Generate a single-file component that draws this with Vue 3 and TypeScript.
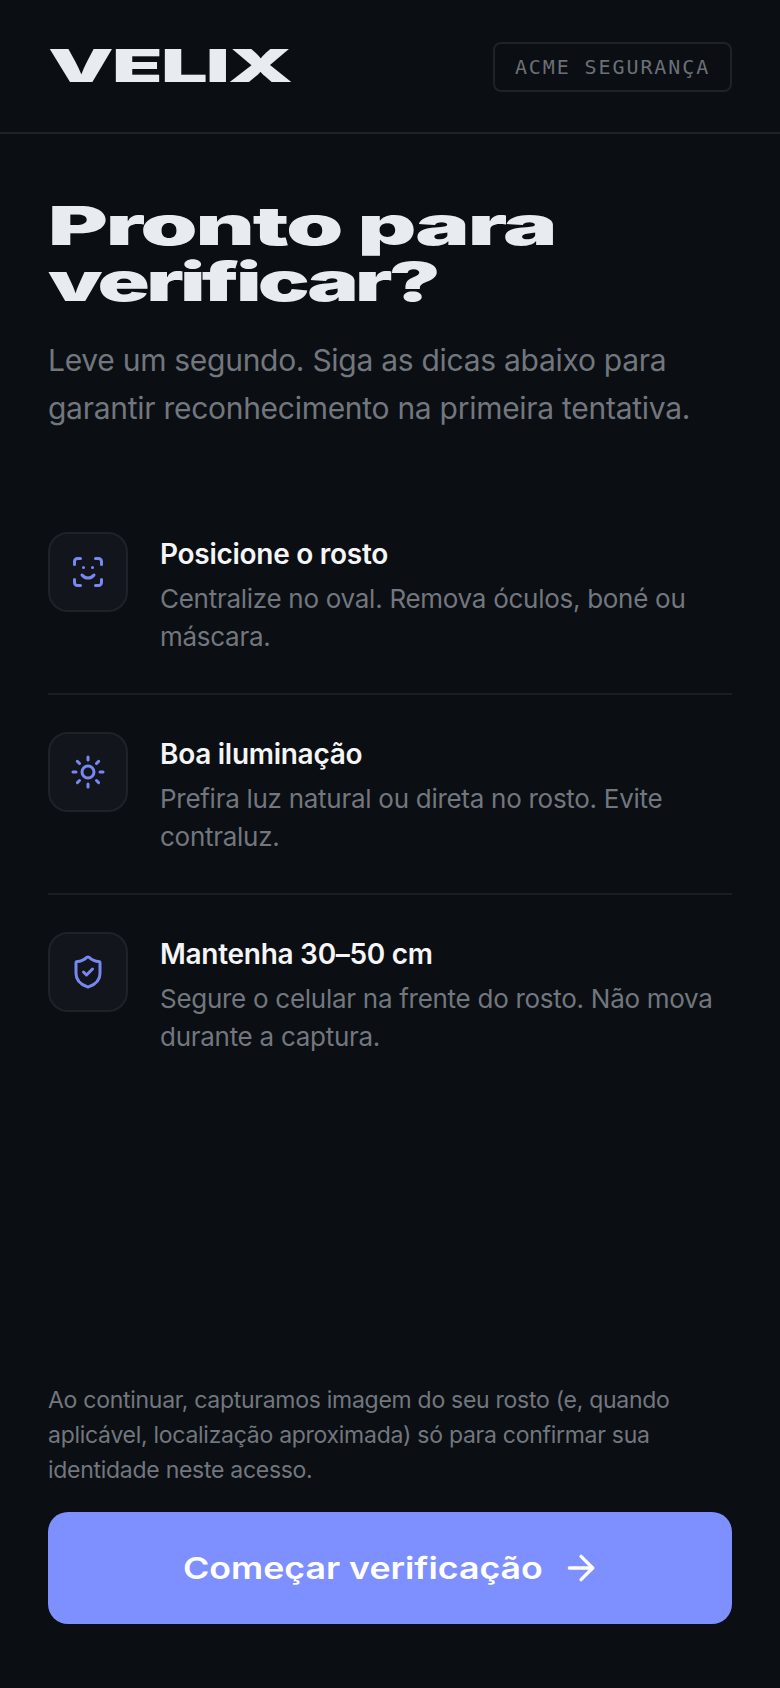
<script setup lang="ts">
interface Tip { id: string; title: string; text: string }
const tips: Tip[] = [
  { id: 'face', title: 'Posicione o rosto', text: 'Centralize no oval. Remova óculos, boné ou máscara.' },
  { id: 'sun', title: 'Boa iluminação', text: 'Prefira luz natural ou direta no rosto. Evite contraluz.' },
  { id: 'shield', title: 'Mantenha 30–50 cm', text: 'Segure o celular na frente do rosto. Não mova durante a captura.' },
]
</script>

<template>
  <div class="page">
    <header class="top">
      <span class="logo">VELIX</span>
      <span class="badge">ACME SEGURANÇA</span>
    </header>
    <main class="main">
      <h1 class="title"><span class="line-a">Pronto para</span><span class="line-b">verificar?</span></h1>
      <p class="sub">Leve um segundo. Siga as dicas abaixo para garantir reconhecimento na primeira tentativa.</p>
      <ul class="tips">
        <li v-for="t in tips" :key="t.id" class="tip">
          <div class="ico">
            <svg width="36" height="36" viewBox="0 0 24 24" fill="none" stroke="#7888f2" stroke-width="2" stroke-linecap="round" stroke-linejoin="round">
              <template v-if="t.id === 'face'">
                <path d="M3 7V5a2 2 0 0 1 2-2h2" /><path d="M17 3h2a2 2 0 0 1 2 2v2" /><path d="M21 17v2a2 2 0 0 1-2 2h-2" /><path d="M7 21H5a2 2 0 0 1-2-2v-2" />
                <path d="M8 14s1.5 2 4 2 4-2 4-2" /><path d="M9 9h.01" /><path d="M15 9h.01" />
              </template>
              <template v-else-if="t.id === 'sun'">
                <circle cx="12" cy="12" r="4" /><path d="M12 2v2" /><path d="M12 20v2" /><path d="m4.93 4.93 1.41 1.41" /><path d="m17.66 17.66 1.41 1.41" /><path d="M2 12h2" /><path d="M20 12h2" /><path d="m6.34 17.66-1.41 1.41" /><path d="m19.07 4.93-1.41 1.41" />
              </template>
              <template v-else>
                <path d="M20 13c0 5-3.5 7.5-7.66 8.95a1 1 0 0 1-.67-.01C7.5 20.5 4 18 4 13V6a1 1 0 0 1 1-1c2 0 4.5-1.2 6.24-2.72a1.17 1.17 0 0 1 1.52 0C14.51 3.81 17 5 19 5a1 1 0 0 1 1 1z" /><path d="m9 12 2 2 4-4" />
              </template>
            </svg>
          </div>
          <div class="body">
            <h2 class="name">{{ t.title }}</h2>
            <p class="desc">{{ t.text }}</p>
          </div>
        </li>
      </ul>
    </main>
    <footer class="foot">
      <p class="legal">Ao continuar, capturamos imagem do seu rosto (e, quando aplicável, localização aproximada) só para confirmar sua identidade neste acesso.</p>
      <button class="cta" type="button">
        <span class="cta-label">Começar verificação</span>
        <svg width="40" height="40" viewBox="0 0 24 24" fill="none" stroke="#fff" stroke-width="2" stroke-linecap="round" stroke-linejoin="round"><path d="M5 12h14" /><path d="m12 5 7 7-7 7" /></svg>
      </button>
    </footer>
  </div>
</template>

<style>
html, body { margin: 0; background: #0b0e12; }
</style>

<style scoped>
.page {
  width: 780px; height: 1688px; box-sizing: border-box; display: flex; flex-direction: column;
  background: #0b0e12; color: #e8ebf0; font-family: Inter, "Liberation Sans", sans-serif; overflow: hidden;
  letter-spacing: -0.28px;
}
.top {
  display: flex; justify-content: space-between; align-items: center;
  height: 134px; box-sizing: border-box; padding: 2px 48px 0; border-bottom: 2px solid #1f2228;
}
.logo {
  font-weight: 900; font-size: 45px; line-height: 1; letter-spacing: -1px; margin-top: -3px;
  transform: scaleX(1.84); transform-origin: left center; color: #e8ebf0;
}
.badge {
  width: 239px; height: 50px; box-sizing: border-box; border: 2px solid #1f2228; border-radius: 8px;
  display: flex; align-items: center; justify-content: center;
  font-family: "DejaVu Sans Mono", monospace; font-size: 20px; letter-spacing: 1.9px; color: #6b7078;
}
.main { flex: 1; padding: 64px 48px 0; display: flex; flex-direction: column; }
.title { margin: 0; display: flex; flex-direction: column; font-size: 54px; line-height: 56px; font-weight: 900; color: #e8ebf0; }
.title span { display: block; transform-origin: left center; white-space: nowrap; }
.line-a { transform: scaleX(1.69); letter-spacing: -1.2px; }
.line-b { transform: scaleX(1.6); letter-spacing: -2.3px; }
.sub { margin: 26px 0 0; font-size: 30px; line-height: 48px; color: #72777f; }
.tips { list-style: none; margin: 63px 0 0; padding: 0; }
.tip { display: flex; gap: 32px; padding: 37px 0; border-bottom: 2px solid #1a1d23; }
.tip:last-child { border-bottom: 0; }
.ico {
  width: 80px; height: 80px; flex: none; box-sizing: border-box; border: 2px solid #1f2228; border-radius: 20px;
  background: #12151b; display: flex; align-items: center; justify-content: center;
}
.body { min-width: 0; padding-top: 4px; }
.name { margin: 0; font-size: 28px; line-height: 36px; font-weight: 600; color: #f4f5f7; }
.desc { margin: 8px 0 0; font-size: 26px; line-height: 38px; color: #72777f; }
.foot { padding: 0 48px 64px; }
.legal { margin: 0 0 24px; font-size: 23px; line-height: 35px; color: #72777f; }
.cta {
  width: 100%; height: 112px; border: 0; border-radius: 20px; background: #7e8fff; color: #fff;
  display: flex; align-items: center; justify-content: center; gap: 20px; padding: 0 0 0 4px;
  font-family: Inter, sans-serif; font-size: 30px; font-weight: 600; letter-spacing: 0;
}
.cta-label { display: inline-block; width: 358px; white-space: nowrap; text-align: left; transform: scaleX(1.19); transform-origin: left center; }
</style>
